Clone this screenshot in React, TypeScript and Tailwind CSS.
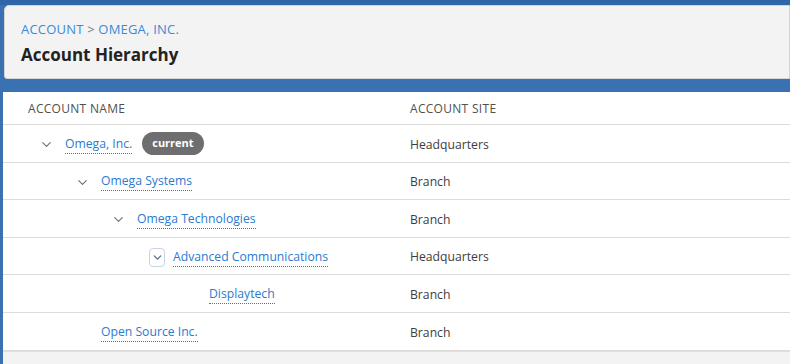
import { ChevronDown } from "lucide-react";

interface Row {
  name: string;
  site: string;
  level: number;
  expandable: boolean;
  current?: boolean;
  focused?: boolean;
}

const rows: Row[] = [
  { name: "Omega, Inc.", site: "Headquarters", level: 0, expandable: true, current: true },
  { name: "Omega Systems", site: "Branch", level: 1, expandable: true },
  { name: "Omega Technologies", site: "Branch", level: 2, expandable: true },
  { name: "Advanced Communications", site: "Headquarters", level: 3, expandable: true, focused: true },
  { name: "Displaytech", site: "Branch", level: 4, expandable: false },
  { name: "Open Source Inc.", site: "Branch", level: 1, expandable: false },
];

const indents = ["pl-[36px]", "pl-[72px]", "pl-[108px]", "pl-[144px]", "pl-[180px]"];

const App = () => {
  return (
    <div
      className="w-[790px] h-[364px] overflow-hidden bg-[#3a71b2] text-[#3e3e3c]"
      style={{ fontFamily: '"Open Sans", "Liberation Sans", sans-serif' }}
    >
      <div className="h-[5px] bg-[#2e66a8]" />
      <div className="pl-[4px]">
        <div className="h-[74px] bg-[#f3f3f3] border border-[#d4d4d4] rounded-tl-[5px] rounded-bl-[3px] px-[16px] pt-[14px]">
          <div className="text-[13px] leading-[18px] uppercase text-[#3b8ad6] tracking-[0.2px]">
            Account <span className="text-[#7a7a7a]">&gt;</span> Omega, Inc.
          </div>
          <h1 className="mt-[6px] text-[17px] leading-[22px] font-bold text-[#222]">
            Account Hierarchy
          </h1>
        </div>
      </div>

      <div className="mt-[13px] ml-[3px] bg-white">
        <div className="flex h-[33px] items-center pt-[2px] border-b border-[#dddbda] text-[12px] uppercase text-[#514f4d] tracking-[0.3px]">
          <div className="w-[407px] pl-[25px]">Account Name</div>
          <div className="flex-1">Account Site</div>
        </div>
        {rows.map((row) => (
          <div
            key={row.name}
            className="flex h-[37.6px] items-center pt-[3px] border-b border-[#dddbda] text-[12.2px]"
          >
            <div className={`w-[407px] flex items-center ${indents[row.level]}`}>
              <span className="flex w-[26px] shrink-0 items-center">
                {row.expandable &&
                  (row.focused ? (
                    <span className="ml-[2px] flex h-[19px] w-[16px] items-center justify-center rounded-[4px] border border-[#c9d4e4]">
                      <ChevronDown size={13} strokeWidth={2.2} className="text-[#54698d]" />
                    </span>
                  ) : (
                    <ChevronDown size={15} strokeWidth={1.8} className="text-[#706e6b]" />
                  ))}
              </span>
              <a className="text-[#2b7ad0] border-b border-dotted border-[#2b7ad0] leading-[16px] pb-[1px] cursor-pointer">
                {row.name}
              </a>
              {row.current && (
                <span className="ml-[10px] -mt-[3px] flex h-[23px] items-center rounded-full bg-[#6e6e6e] px-[10px] text-[11px] font-bold text-white">
                  current
                </span>
              )}
            </div>
            <div className="flex-1 text-[#3e3e3c]">{row.site}</div>
          </div>
        ))}
        <div className="h-[20px] bg-[#f3f3f3] border-t border-[#e0e0e0]" />
      </div>
    </div>
  );
};

export default App;
